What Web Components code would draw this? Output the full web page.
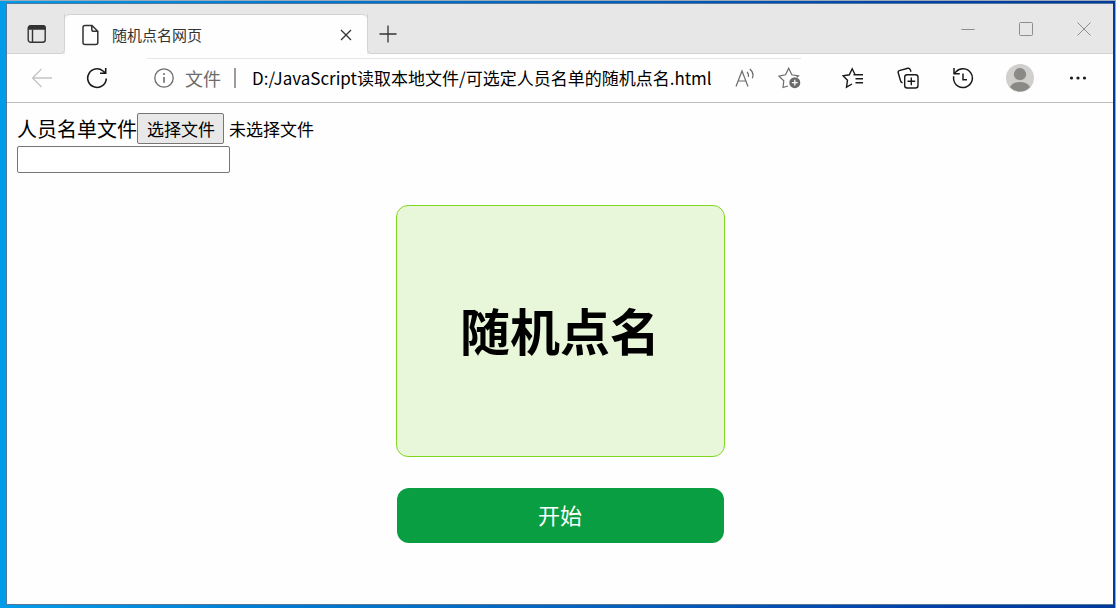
<!DOCTYPE html>
<html lang="zh-CN">
<head>
<meta charset="utf-8">
<title>随机点名网页</title>
<style>
html, body { margin: 0; }
body { font-family: "Noto Sans CJK SC", sans-serif; color: #000; }
</style>
</head>
<body>
<browser-window>
  <tab-strip slot="tabs">随机点名网页</tab-strip>
  <tool-bar slot="toolbar" url="D:/JavaScript读取本地文件/可选定人员名单的随机点名.html">文件</tool-bar>
  <file-picker>人员名单文件</file-picker>
  <roll-call>随机点名</roll-call>
</browser-window>
<script>
function define(name, html, setup) {
  customElements.define(name, class extends HTMLElement {
    constructor() {
      super();
      this.attachShadow({ mode: "open" }).innerHTML = html;
    }
    connectedCallback() {
      if (setup) setup(this, this.shadowRoot);
    }
  });
}

const iconButton = `
  button { border: 0; padding: 0; background: none; color: inherit; font: inherit;
    display: flex; align-items: center; justify-content: center; flex: none; }
  svg { display: block; fill: none; stroke: currentColor; }
`;

define("browser-window", `
<style>
  :host { display: flex; flex-direction: column; box-sizing: border-box; min-height: 100vh;
    padding: 1px 1px 0 0; background: #9fa9b3; }
  .desktop { flex: 1; display: flex; padding: 2px 2px 3px 6px;
    background: linear-gradient(90deg, #009cea 0, #0079d0 27%, #0560bc 55%, #033fa6 85%, #013a9c 100%); }
  .window { flex: 1; min-width: 0; display: flex; flex-direction: column; background: #fefefe;
    border: 1px solid #55789a; border-right: 0; }
  main { flex: 1; padding: 10px 10px 0; }
</style>
<div class="desktop"><div class="window">
  <slot name="tabs"></slot>
  <slot name="toolbar"></slot>
  <main><slot></slot></main>
</div></div>`);

define("tab-strip", `
<style>
  :host { display: flex; height: 50px; box-sizing: border-box; padding-top: 10px; color: #333;
    background: linear-gradient(#e7e7e7, #e7e7e7) 0 0 / 100% 40px no-repeat, #e7e7e7; }
  ${iconButton}
  .edge, .tab, .rest { box-sizing: border-box; display: flex; border: 0 solid #d2d2d2; }
  .edge { width: 58px; flex: none; justify-content: center; padding-left: 2px;
    border-width: 0 1px 1px 0; border-radius: 0 0 5px 0; }
  .tab { flex: 0 1 302px; min-width: 0; align-items: center; padding: 0 11px 0 17px;
    background: #fefefe; border-top-width: 1px; border-radius: 5px 5px 0 0; }
  .title { flex: 1; font-size: 15px; line-height: 20px; padding-left: 13px; white-space: nowrap; }
  .tab button { width: 20px; height: 20px; }
  .rest { flex: 1; border-width: 0 0 1px 1px; border-radius: 0 0 0 5px; }
  .add { width: 40px; }
  .controls { margin-left: auto; display: flex; color: #8d8d8d; }
  .controls button { width: 58px; padding-bottom: 10px; }
</style>
<div class="edge"><button aria-label="标签操作菜单"><svg width="20" height="20" viewBox="0 0 20 20" stroke-width="1.4"><rect x="1.2" y="1.7" width="17" height="16.6" rx="2.5"/><path d="M2 5V3.5Q2 2 3.5 2H16.5Q18 2 18 3.5V5Z" fill="currentColor"/><path d="M5.5 5.5V18"/></svg></button></div>
<div class="tab">
  <svg width="17" height="22" viewBox="0 0 17 22" stroke-width="1.5"><path d="M3 1.5H10L15.8 7.3V18.5Q15.8 20.5 13.8 20.5H3Q1 20.5 1 18.5V3.5Q1 1.5 3 1.5ZM9.8 1.8V5.5Q9.8 7.3 11.6 7.3H15.5"/></svg>
  <span class="title"><slot></slot></span>
  <button aria-label="关闭标签"><svg width="12" height="12" viewBox="0 0 12 12" stroke-width="1.3"><path d="M1 1L11 11M11 1L1 11"/></svg></button>
</div>
<div class="rest">
  <button class="add" aria-label="新建标签"><svg width="18" height="18" viewBox="0 0 18 18" stroke-width="1.3"><path d="M9 .5V17.5M.5 9H17.5"/></svg></button>
  <div class="controls">
    <button aria-label="最小化"><svg width="14" height="14" viewBox="0 0 14 14"><path d="M.5 7.5H13.5"/></svg></button>
    <button aria-label="最大化"><svg width="14" height="14" viewBox="0 0 14 14"><rect x=".5" y=".5" width="13" height="13" rx="1"/></svg></button>
    <button aria-label="关闭"><svg width="14" height="14" viewBox="0 0 14 14"><path d="M.5 .5L13.5 13.5M13.5 .5L.5 13.5"/></svg></button>
  </div>
</div>`);

define("tool-bar", `
<style>
  :host { display: flex; height: 49px; box-sizing: border-box; padding: 0 7px;
    border-bottom: 1px solid #bcbcbc; background: #fefefe; color: #1a1a1a; }
  ${iconButton}
  .nav { width: 55px; }
  .back { color: #c4c4c4; }
  .address { flex: 1; min-width: 0; display: flex; align-items: center; margin: 4px 24px 0 23px; padding: 0 7px 5px;
    border-top: 1px solid #e6e6e6; color: #6b6b6b; }
  .info { flex: none; }
  .scheme { padding: 0 13px 0 11px; font-size: 18px; line-height: 24px; white-space: nowrap; }
  .rule { width: 2px; height: 20px; background: #9b9b9b; margin-right: 16px; flex: none; }
  input { flex: 1; min-width: 0; border: 0; padding: 0; margin: 0; outline: 0; background: none; color: #000;
    font: inherit; font-size: 17px; line-height: 24px; height: 24px; }
  .address button { width: 45px; }
  .address button:last-child { margin-right: -18px; }
  .tools { display: flex; }
  .profile { width: 60px; }
  .profile svg, .more svg { stroke: none; }
  .more { width: 56px; }
</style>
<button class="nav back" aria-label="后退"><svg width="22" height="20" viewBox="0 0 22 20" stroke-width="1.3"><path d="M21 10H1.5M10.5 1L1.5 10L10.5 19"/></svg></button>
<button class="nav" aria-label="刷新"><svg width="22" height="22" viewBox="0 0 22 22" stroke-width="1.6"><path d="M20.3 11.5A9.3 9.3 0 1 1 17 4L19.5 6.2M19.7 1V6.3H14"/></svg></button>
<div class="address">
  <svg class="info" width="20" height="20" viewBox="0 0 20 20" stroke-width="1.3"><circle cx="10" cy="10" r="9.2"/><path d="M10 9V14.8" stroke-width="1.6"/><circle cx="10" cy="6" r="1" fill="currentColor" stroke="none"/></svg>
  <span class="scheme"><slot></slot></span><span class="rule"></span>
  <input type="text" aria-label="地址" spellcheck="false">
  <button aria-label="大声朗读"><svg width="20" height="20" viewBox="0 0 20 20" stroke-width="1.2"><path d="M1 18.5L7 3L13 18.5M3.2 13H10.8M12 4Q14 6 13.3 8.8M14.8 1Q19.5 5 17.3 10.3"/></svg></button>
  <button aria-label="添加到收藏夹"><svg width="23" height="22" viewBox="0 0 23 22" stroke-width="1.2"><path d="M10 19L5 20.5L5.8 13.7L1 9.2L7.5 7.8L10.7 1.2L13.8 7.8L20.5 8.8L18.8 10.3"/><circle cx="16.8" cy="15.7" r="5.5" fill="currentColor" stroke="none"/><path d="M16.8 12.8V18.6M13.9 15.7H19.7" stroke="#fff" stroke-width="1.3"/></svg></button>
</div>
<div class="tools">
  <button class="nav" aria-label="收藏夹"><svg width="22" height="22" viewBox="0 0 22 22" stroke-width="1.4"><path d="M10 17L4.5 20.2L5.5 13.2L1 8.8L7.3 7.8L10.2 1.8L13 7.5M11.5 7.8H21M13.5 11.8H21M13.5 15.8H21"/></svg></button>
  <button class="nav" aria-label="集锦"><svg width="22" height="22" viewBox="0 0 22 22" stroke-width="1.4"><rect x="7.7" y="7.7" width="13.3" height="13.3" rx="2.5"/><path d="M14.3 10.5V18.2M10.5 14.3H18.2M5.5 15.8Q4 15.4 3.6 14L1.2 5.8Q.8 4.2 2.3 3.7L10.8 1.3Q12.5 1 13.2 2.5L14 4.8"/></svg></button>
  <button class="nav" aria-label="历史记录"><svg width="22" height="22" viewBox="0 0 22 22" stroke-width="1.5"><path d="M1.6 9.3V12A9.4 9.4 0 1 0 4 4.8L2.3 6.5M2 1V6.8H7.8M11 6.5V12.8H15"/></svg></button>
  <button class="profile" aria-label="个人资料"><svg width="28" height="28" viewBox="0 0 28 28"><circle cx="14" cy="14" r="14" fill="#d0cfcd"/><circle cx="14" cy="10.2" r="6.1" fill="#8b8986"/><path d="M4 23Q7 18 14 18T24 23Q20 27.5 14 27.5T4 23Z" fill="#8b8986"/></svg></button>
  <button class="more" aria-label="设置及其他"><svg width="18" height="4" viewBox="0 0 18 4"><g fill="currentColor"><circle cx="2.5" cy="2" r="1.6"/><circle cx="9" cy="2" r="1.6"/><circle cx="15.5" cy="2" r="1.6"/></g></svg></button>
</div>`, (el, root) => {
  root.querySelector("input").value = el.getAttribute("url");
});

define("file-picker", `
<style>
  :host { display: block; }
  .row { display: flex; align-items: center; height: 31px; margin-bottom: 2px; white-space: nowrap; }
  label { font-size: 20px; line-height: 30px; }
  button { box-sizing: border-box; height: 31px; padding: 0 8px 0 9px; font: inherit; font-size: 17px; line-height: 24px; color: #000;
    background: #e8e8e8; border: 1px solid #767676; border-radius: 2px; }
  .status { font-size: 17px; line-height: 24px; padding-left: 5px; }
  .names { display: block; box-sizing: border-box; width: 213px; height: 27px; margin: 0; padding: 2px;
    font: inherit; font-size: 17px; background: #fff; border: 1px solid #767676; border-radius: 2px; }
</style>
<div class="row">
  <label for="file"><slot></slot></label>
  <input type="file" id="file" hidden>
  <button type="button">选择文件</button>
  <span class="status">未选择文件</span>
</div>
<input class="names" type="text" aria-label="人员名单">`, (el, root) => {
  const file = root.querySelector("#file");
  root.querySelector("button").onclick = () => file.click();
  file.onchange = () => {
    root.querySelector(".status").textContent = file.files[0] ? file.files[0].name : "未选择文件";
  };
});

define("roll-call", `
<style>
  :host { display: flex; flex-direction: column; align-items: center; padding: 32px 0; }
  .card { box-sizing: border-box; width: 329px; max-width: 100%; height: 252px; display: flex; align-items: center;
    justify-content: center; padding-bottom: 5px; font-size: 50px; line-height: 72px; font-weight: 700; white-space: nowrap;
    background: #e8f6d9; border: 1px solid #82d820; border-radius: 12px; }
  button { width: 327px; max-width: 100%; height: 55px; margin-top: 31px; padding: 0 0 4px; border: 0; border-radius: 12px;
    background: #099e41; color: #fff; font: inherit; font-size: 22px; line-height: 32px; }
</style>
<div class="card"><slot></slot></div>
<button type="button">开始</button>`);
</script>
</body>
</html>
